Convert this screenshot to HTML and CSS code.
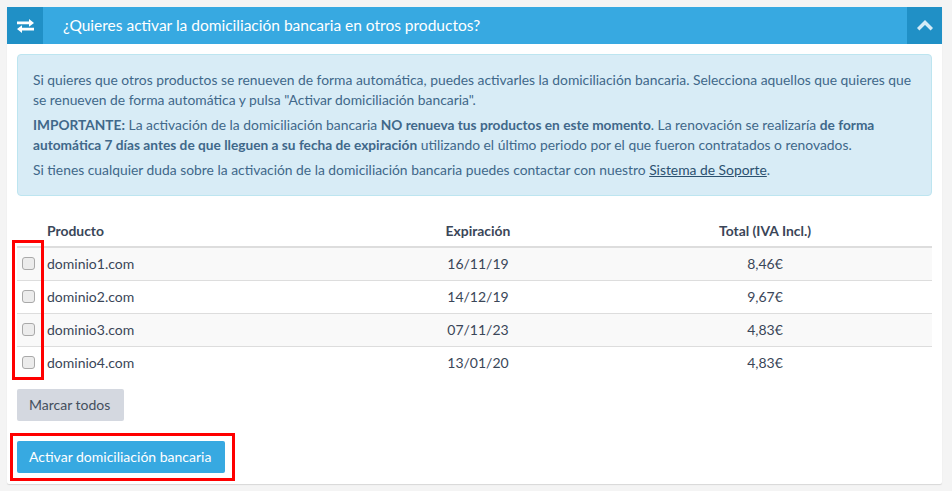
FILE: index.html
```html
<!DOCTYPE html>
<html lang="es">
<head>
<meta charset="utf-8">
<title>Domiciliación bancaria</title>
<link rel="stylesheet" href="styles.css">
</head>
<body>
<section class="panel">
  <header class="panel-head">
    <span class="head-icon">
      <svg width="17" height="14" viewBox="0 0 17 14" fill="#fff"><path d="M0 2.4h12V0l5 3.9-5 3.9V5.2H0z"/><path d="M17 8.8H5V6.2L0 10.1 5 14v-2.4h12z"/></svg>
    </span>
    <h2 class="head-title">¿Quieres activar la domiciliación bancaria en otros productos?</h2>
    <span class="head-icon head-icon-right">
      <svg width="16" height="11" viewBox="0 0 16 11" fill="none" stroke="#d4ebf7" stroke-width="3.4"><path d="M1.2 9.3 8 2.5l6.8 6.8"/></svg>
    </span>
  </header>
  <div class="panel-body">
    <div class="alert">
      <p>Si quieres que otros productos se renueven de forma automática, puedes activarles la domiciliación bancaria. Selecciona aquellos que quieres que se renueven de forma automática y pulsa "Activar domiciliación bancaria".</p>
      <p><strong>IMPORTANTE:</strong> La activación de la domiciliación bancaria <strong>NO renueva tus productos en este momento</strong>. La renovación se realizaría <strong>de forma automática 7 días antes de que lleguen a su fecha de expiración</strong> utilizando el último periodo por el que fueron contratados o renovados.</p>
      <p>Si tienes cualquier duda sobre la activación de la domiciliación bancaria puedes contactar con nuestro <a href="#">Sistema de Soporte</a>.</p>
    </div>
    <table class="products">
      <colgroup>
        <col class="col-check"><col class="col-name"><col class="col-date"><col class="col-total">
      </colgroup>
      <thead>
        <tr><th></th><th class="left">Producto</th><th>Expiración</th><th>Total (IVA Incl.)</th></tr>
      </thead>
      <tbody>
        <tr><td><input type="checkbox" class="check"></td><td class="left">dominio1.com</td><td>16/11/19</td><td>8,46€</td></tr>
        <tr><td><input type="checkbox" class="check"></td><td class="left">dominio2.com</td><td>14/12/19</td><td>9,67€</td></tr>
        <tr><td><input type="checkbox" class="check"></td><td class="left">dominio3.com</td><td>07/11/23</td><td>4,83€</td></tr>
        <tr><td><input type="checkbox" class="check"></td><td class="left">dominio4.com</td><td>13/01/20</td><td>4,83€</td></tr>
      </tbody>
    </table>
    <div class="actions">
      <button class="btn btn-grey" type="button">Marcar todos</button>
      <button class="btn btn-blue" type="button">Activar domiciliación bancaria</button>
    </div>
  </div>
  <div class="mark mark-checks"></div>
  <div class="mark mark-button"></div>
</section>
</body>
</html>
```
FILE: styles.css
```css
* { box-sizing: border-box; }
html, body { height: 100%; }
body {
  margin: 0;
  padding: 7px 10px 0 7px;
  background: #f4f4f4;
  font-family: Lato, "Liberation Sans", sans-serif;
  font-size: 14px;
  line-height: 20px;
  color: #3a4658;
  overflow: hidden;
}
.panel {
  position: relative;
  background: #fff;
  height: 477px;
  border-radius: 2px;
  box-shadow: 0 1px 1px rgba(0,0,0,.12);
}
.panel-head {
  display: flex;
  align-items: stretch;
  height: 37px;
  background: #37a9e1;
  border-radius: 2px 2px 0 0;
}
.head-icon {
  flex: none;
  width: 36px;
  display: flex;
  align-items: center;
  justify-content: center;
  background: #2090c6;
}
.head-icon-right { width: 35px; }
.head-title {
  flex: 1;
  margin: 0;
  padding-left: 20px;
  font-size: 15.5px;
  font-weight: 400;
  line-height: 37px;
  color: #fff;
}
.panel-body { padding: 10px 10px 0; }
.alert {
  height: 142px;
  padding: 15px 15px 10px;
  background: #d8ecf6;
  border: 1px solid #bde5f0;
  border-radius: 4px;
  font-size: 13.85px;
  color: #40688a;
}
.alert p { margin: 0 0 5px; }
.alert strong { font-size: 13.7px; font-weight: 700; }
.alert a { color: #2c5170; text-decoration: underline; }
.products {
  width: 100%;
  margin-top: 19px;
  border-collapse: collapse;
  table-layout: fixed;
}
.col-check { width: 30px; }
.col-name { width: 311px; }
.col-date { width: 240px; }
.products th, .products td { padding: 0; text-align: center; }
.products th {
  height: 32px;
  font-size: 13.9px;
  font-weight: 700;
  color: #3a4658;
  border-bottom: 2px solid #dddddd;
}
.products td {
  height: 33px;
  border-top: 1px solid #dddddd;
}
.products tbody tr:first-child td { border-top: 0; }
.products tbody tr:nth-child(odd) { background: #f9f9f9; }
.products .left { text-align: left; }
.check {
  display: block;
  appearance: none;
  width: 13px;
  height: 13px;
  margin: 0 0 0 5px;
  background: #ececec;
  border: 1px solid #a9a9a9;
  border-radius: 3px;
}
.actions {
  display: flex;
  flex-direction: column;
  align-items: flex-start;
  gap: 20px;
  margin-top: 10px;
}
.btn {
  height: 32px;
  padding: 0 14px 0 12px;
  border: 0;
  border-radius: 2px;
  font: 14px/20px Lato, "Liberation Sans", sans-serif;
}
.btn-grey { background: #d4d8e0; color: #444f5e; }
.btn-blue { background: #37a9e1; color: #fff; }
.mark {
  position: absolute;
  border: 3px solid #f00;
  pointer-events: none;
}
.mark-checks { left: 5px; top: 233px; width: 32px; height: 140px; }
.mark-button { left: 3px; top: 426px; width: 225px; height: 48px; }
```
